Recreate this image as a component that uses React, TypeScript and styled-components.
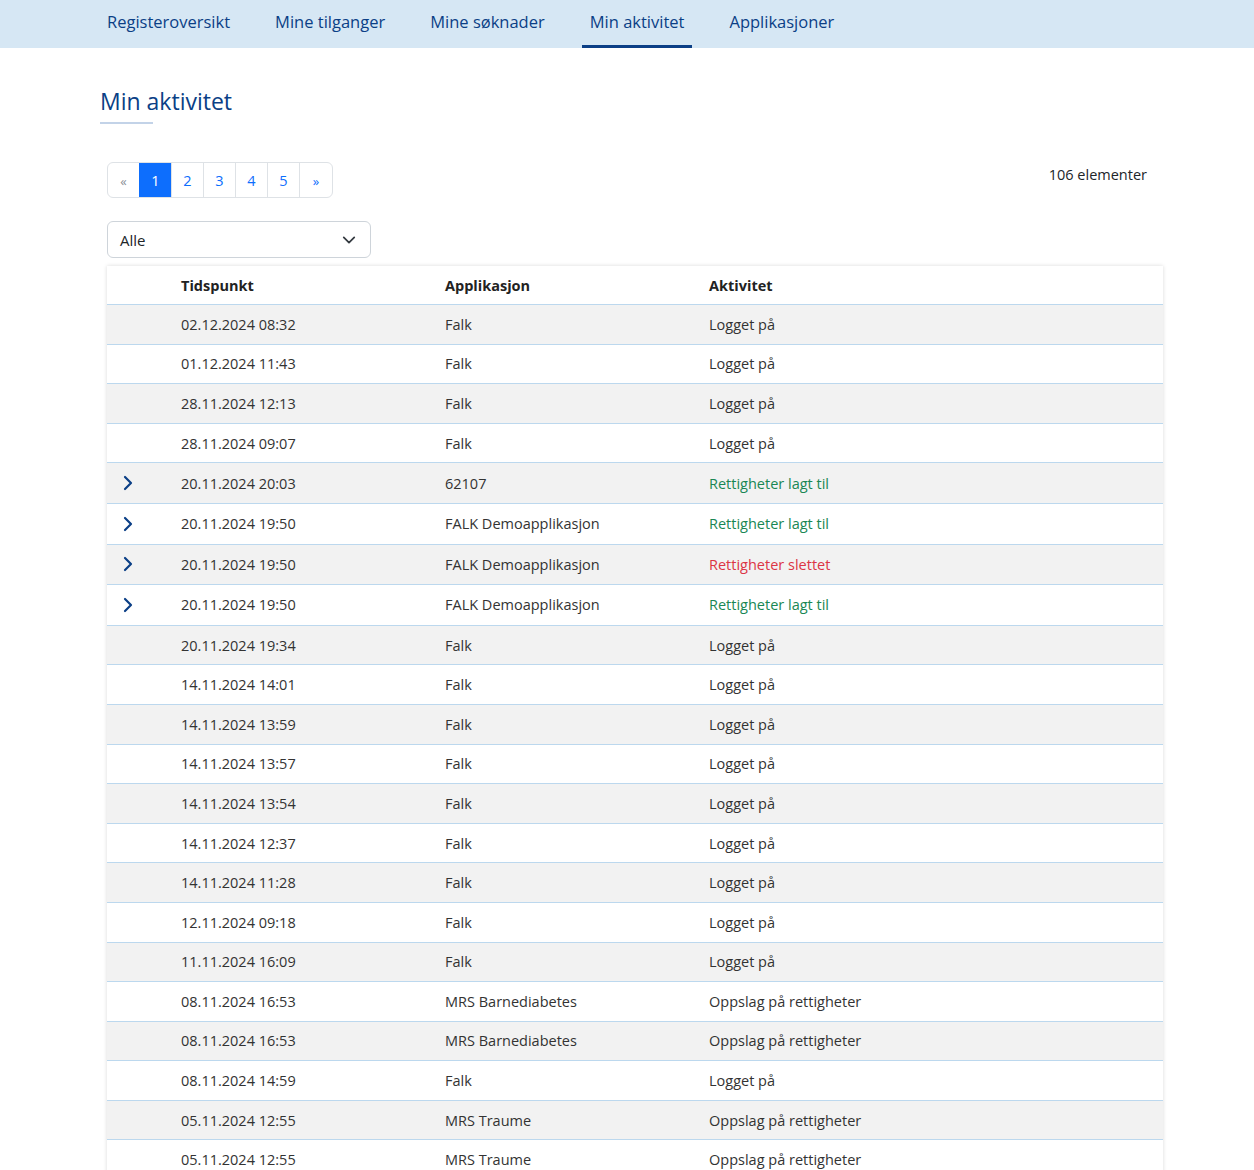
import styled, { createGlobalStyle, css } from "styled-components";

const GlobalStyle = createGlobalStyle`
  html, body {
    margin: 0;
    padding: 0;
    background: #fff;
    font-family: "Open Sans", "Liberation Sans", sans-serif;
  }
`;

type Row = {
    time: string;
    app: string;
    activity: string;
    kind?: "added" | "removed";
};

const rows: Row[] = [
    { time: "02.12.2024 08:32", app: "Falk", activity: "Logget på" },
    { time: "01.12.2024 11:43", app: "Falk", activity: "Logget på" },
    { time: "28.11.2024 12:13", app: "Falk", activity: "Logget på" },
    { time: "28.11.2024 09:07", app: "Falk", activity: "Logget på" },
    { time: "20.11.2024 20:03", app: "62107", activity: "Rettigheter lagt til", kind: "added" },
    { time: "20.11.2024 19:50", app: "FALK Demoapplikasjon", activity: "Rettigheter lagt til", kind: "added" },
    { time: "20.11.2024 19:50", app: "FALK Demoapplikasjon", activity: "Rettigheter slettet", kind: "removed" },
    { time: "20.11.2024 19:50", app: "FALK Demoapplikasjon", activity: "Rettigheter lagt til", kind: "added" },
    { time: "20.11.2024 19:34", app: "Falk", activity: "Logget på" },
    { time: "14.11.2024 14:01", app: "Falk", activity: "Logget på" },
    { time: "14.11.2024 13:59", app: "Falk", activity: "Logget på" },
    { time: "14.11.2024 13:57", app: "Falk", activity: "Logget på" },
    { time: "14.11.2024 13:54", app: "Falk", activity: "Logget på" },
    { time: "14.11.2024 12:37", app: "Falk", activity: "Logget på" },
    { time: "14.11.2024 11:28", app: "Falk", activity: "Logget på" },
    { time: "12.11.2024 09:18", app: "Falk", activity: "Logget på" },
    { time: "11.11.2024 16:09", app: "Falk", activity: "Logget på" },
    { time: "08.11.2024 16:53", app: "MRS Barnediabetes", activity: "Oppslag på rettigheter" },
    { time: "08.11.2024 16:53", app: "MRS Barnediabetes", activity: "Oppslag på rettigheter" },
    { time: "08.11.2024 14:59", app: "Falk", activity: "Logget på" },
    { time: "05.11.2024 12:55", app: "MRS Traume", activity: "Oppslag på rettigheter" },
    { time: "05.11.2024 12:55", app: "MRS Traume", activity: "Oppslag på rettigheter" },
];

const tabs = ["Registeroversikt", "Mine tilganger", "Mine søknader", "Min aktivitet", "Applikasjoner"];
const pages = ["«", "1", "2", "3", "4", "5", "»"];

const App = () => {
    return (
        <>
            <GlobalStyle />
            <NavBar>
                {tabs.map((t) => (
                    <NavItem key={t} $active={t === "Min aktivitet"}>{t}</NavItem>
                ))}
            </NavBar>
            <Main>
                <Title>Min aktivitet</Title>
                <Content>
                    <TopRow>
                        <Pagination>
                            {pages.map((p) => (
                                <PageItem key={p} $active={p === "1"} $arrow={p === "«" || p === "»"} $muted={p === "«"}>{p}</PageItem>
                            ))}
                        </Pagination>
                        <Count>106 elementer</Count>
                    </TopRow>
                    <Select>
                        <span>Alle</span>
                        <svg width="14" height="14" viewBox="0 0 16 16">
                            <path d="M2 5l6 6 6-6" fill="none" stroke="#343a40" strokeWidth="2" strokeLinecap="round" strokeLinejoin="round" />
                        </svg>
                    </Select>
                    <Table>
                        <colgroup>
                            <Col $w={66} />
                            <Col $w={264} />
                            <Col $w={264} />
                            <Col />
                        </colgroup>
                        <thead>
                            <tr>
                                <Th />
                                <Th>Tidspunkt</Th>
                                <Th>Applikasjon</Th>
                                <Th>Aktivitet</Th>
                            </tr>
                        </thead>
                        <tbody>
                            {rows.map((r, i) => (
                                <Tr key={i} $striped={i % 2 === 0}>
                                    <Td $tall={!!r.kind}>
                                        {r.kind && (
                                            <Chevron width="14" height="16" viewBox="0 0 14 16">
                                                <path d="M4 2l6 6-6 6" fill="none" stroke="#0b3f86" strokeWidth="2.2" strokeLinecap="round" strokeLinejoin="round" />
                                            </Chevron>
                                        )}
                                    </Td>
                                    <Td>{r.time}</Td>
                                    <Td>{r.app}</Td>
                                    <Td $kind={r.kind}>{r.activity}</Td>
                                </Tr>
                            ))}
                        </tbody>
                    </Table>
                </Content>
            </Main>
        </>
    );
};

export default App;

const NavBar = styled.nav`
  display: flex;
  align-items: stretch;
  height: 48px;
  background: #d6e7f4;
  padding-left: 99px;
  gap: 29px;
`;

const NavItem = styled.div<{ $active?: boolean }>`
  display: flex;
  align-items: center;
  padding: 0 8px 2px;
  font-size: 16.5px;
  font-weight: 500;
  color: #0b3f86;
  border-bottom: 3px solid transparent;
  ${(p) =>
        p.$active &&
        css`
      border-bottom-color: #0b3f86;
    `}
`;

const Main = styled.main`
  padding: 38px 0 0 100px;
`;

const Title = styled.h1`
  display: inline-block;
  margin: 0;
  font-size: 23px;
  font-weight: 500;
  color: #0b3f86;
  line-height: 30px;
  position: relative;
  padding-bottom: 8px;
  &::after {
    content: "";
    position: absolute;
    left: 0;
    bottom: 0;
    width: 53px;
    height: 2px;
    background: #c3d3e8;
  }
`;

const Content = styled.div`
  width: 1056px;
  margin-left: 7px;
  margin-top: 38px;
`;

const TopRow = styled.div`
  display: flex;
  justify-content: space-between;
  align-items: flex-start;
  padding-right: 16px;
`;

const Pagination = styled.div`
  display: flex;
  border: 1px solid #dee2e6;
  border-radius: 6px;
  overflow: hidden;
  height: 34px;
`;

const PageItem = styled.div<{ $active?: boolean; $arrow?: boolean; $muted?: boolean }>`
  width: 31px;
  display: flex;
  align-items: center;
  justify-content: center;
  font-size: 14.5px;
  color: #0d6efd;
  border-left: 1px solid #dee2e6;
  &:first-child {
    border-left: none;
  }
  &:last-child {
    width: 32px;
  }
  ${(p) => p.$arrow && css`font-size: 13px; padding-top: 2px;`}
  ${(p) => p.$muted && css`color: #8a8f96;`}
  ${(p) =>
        p.$active &&
        css`
      background: #0d6efd;
      color: #fff;
      border-left-color: #0d6efd;
    `}
`;

const Count = styled.div`
  font-size: 14.5px;
  font-weight: 500;
  color: #212529;
  margin-top: 3px;
`;

const Select = styled.div`
  margin-top: 23px;
  width: 264px;
  height: 37px;
  box-sizing: border-box;
  border: 1px solid #ced4da;
  border-radius: 6px;
  display: flex;
  align-items: center;
  justify-content: space-between;
  padding: 0 14px 0 12px;
  font-size: 15px;
  color: #212529;
`;

const Table = styled.table`
  margin-top: 8px;
  width: 1056px;
  border-collapse: collapse;
  table-layout: fixed;
  box-shadow: 0 0 4px rgba(0, 0, 0, 0.15);
  font-size: 14.5px;
  color: #333;
`;

const Col = styled.col<{ $w?: number }>`
  width: ${(p) => (p.$w ? `${p.$w}px` : "auto")};
`;

const Th = styled.th`
  text-align: left;
  font-weight: 700;
  color: #222;
  height: 38px;
  padding: 0 8px;
  border-bottom: 1px solid #bcd8ee;
  font-size: 14.5px;
`;

const Tr = styled.tr<{ $striped?: boolean }>`
  background: ${(p) => (p.$striped ? "#f2f2f2" : "#fff")};
  border-bottom: 1px solid #bcd8ee;
`;

const Td = styled.td<{ $kind?: "added" | "removed"; $tall?: boolean }>`
  padding: 0 8px;
  height: ${(p) => (p.$tall ? "39.6px" : "38.6px")};
  white-space: nowrap;
  color: ${(p) => (p.$kind === "added" ? "#198754" : p.$kind === "removed" ? "#dc3545" : "#333")};
  &:first-child {
    padding-left: 14px;
  }
`;

const Chevron = styled.svg`
  display: block;
`;
